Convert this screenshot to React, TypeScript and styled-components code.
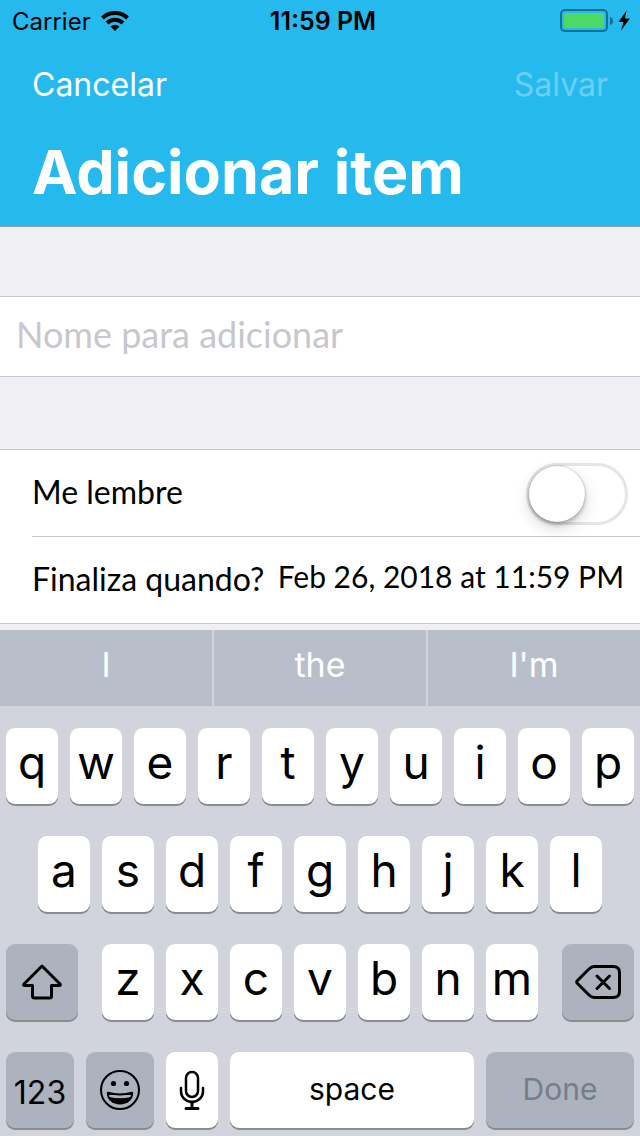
import React, { useState } from 'react';
import styled, { createGlobalStyle } from 'styled-components';

const ui = `Inter, "Liberation Sans", sans-serif`;
const form = `Lato, "Open Sans", sans-serif`;

const GlobalStyle = createGlobalStyle`
  *, *::before, *::after { box-sizing: border-box; }
  body { margin: 0; background: #efeff4; font-family: ${ui}; color: #000; }
  button, input { font: inherit; color: inherit; margin: 0; padding: 0; border: 0; background: none; }
  button:not(:disabled) { cursor: pointer; }
`;

const Screen = styled.div`
  display: flex;
  flex-direction: column;
  min-height: 100vh;
`;

const Header = styled.header`
  background: #25b9ee;
  border-bottom: 1px solid #8f9fa8;
`;

const StatusBar = styled.div`
  display: grid;
  grid-template-columns: 1fr auto 1fr;
  align-items: center;
  height: 40px;
  padding: 2px 10px 0 12px;
  font-size: 24px;
`;

const StatusGroup = styled.div<{ $end?: boolean }>`
  display: flex;
  align-items: center;
  justify-content: ${(p) => (p.$end ? 'flex-end' : 'flex-start')};
  gap: 10px;
`;

const Clock = styled.time`
  padding-left: 4px;
  font-size: 25px;
  font-weight: 600;
`;

const NavBar = styled.nav`
  display: flex;
  align-items: center;
  justify-content: space-between;
  height: 88px;
  padding: 2px 32px 0;
`;

const NavButton = styled.button`
  color: #fff;
  font-size: 32px;
  line-height: 40px;
  &:disabled { color: #6bcff4; }
`;

const Title = styled.h1`
  margin: 0;
  padding: 8px 32px 18px;
  color: #fff;
  font-size: 61px;
  line-height: 72px;
  font-weight: 700;
`;

const Form = styled.main`
  flex: 1;
  padding: 69px 0 6px;
  font-family: ${form};
`;

const Section = styled.section`
  background: #fff;
  border: solid #c8c7cc;
  border-width: 1px 0;
  & + & { margin-top: 72px; }
`;

const NameInput = styled.input`
  display: block;
  width: 100%;
  height: 79px;
  padding: 0 16px 6px;
  font-size: 36px;
  outline: none;
  &::placeholder { color: #c7c7cd; opacity: 1; }
`;

const Row = styled.div`
  display: flex;
  align-items: center;
  justify-content: space-between;
  height: 86px;
  margin-left: 32px;
  line-height: 40px;
  & + & {
    height: 87px;
    border-top: 1px solid #c8c7cc;
  }
`;

const RowLabel = styled.label`
  padding-bottom: 2px;
  font-size: 32px;
  white-space: nowrap;
`;

const DateValue = styled.button`
  padding: 0 16px 8px 0;
  font-size: 30px;
  white-space: nowrap;
`;

const Switch = styled.input`
  appearance: none;
  width: 102px;
  height: 62px;
  margin: 2px 12px 0 0;
  padding: 0;
  border: 3px solid #e5e5e5;
  border-radius: 31px;
  background: #fff;
  &::before {
    content: '';
    display: block;
    width: 56px;
    height: 56px;
    border-radius: 50%;
    background: #fff;
    box-shadow: 0 6px 16px rgba(0, 0, 0, 0.16), 0 3px 4px rgba(0, 0, 0, 0.2), 0 0 2px rgba(0, 0, 0, 0.3);
  }
  &:checked { background: #4cd964; border-color: #4cd964; }
  &:checked::before { margin-left: 40px; }
`;

const Keyboard = styled.div`
  background: #d1d4dc;
  padding-bottom: 8px;
`;

const Suggestions = styled.div`
  display: grid;
  grid-template-columns: repeat(3, 1fr);
  gap: 2px;
  margin-bottom: 22px;
`;

const Suggestion = styled.button`
  height: 76px;
  padding-bottom: 8px;
  background: #b8bfca;
  color: #fff;
  font-size: 34px;
`;

const KeyRow = styled.div<{ $inset?: boolean }>`
  display: flex;
  gap: 12px;
  padding: 0 ${(p) => (p.$inset ? 'calc(5% + 6px)' : '6px')};
  & + & { margin-top: 32px; }
`;

type KeyKind = 'letter' | 'word' | 'digits' | 'icon';
type KeyProps = { $kind?: KeyKind; $grow?: number; $dark?: boolean; $gap?: 'left' | 'right' };

const keySize: Record<KeyKind, number> = { letter: 46, word: 30, digits: 32, icon: 30 };
const keyPadding: Record<KeyKind, string> = { letter: '0 0 8px', word: '0 0 2px', digits: '4px 0 0', icon: '0' };

const Key = styled.button<KeyProps>`
  display: flex;
  align-items: center;
  justify-content: center;
  flex: ${(p) => p.$grow ?? 52} 1 0;
  min-width: 0;
  height: 76px;
  padding: ${(p) => keyPadding[p.$kind ?? 'letter']};
  margin-left: ${(p) => (p.$gap === 'left' ? 12 : 0)}px;
  margin-right: ${(p) => (p.$gap === 'right' ? 12 : 0)}px;
  border-radius: 9px;
  background: ${(p) => (p.$dark ? '#acb3bf' : '#fff')};
  box-shadow: 0 2px 0 #898c91;
  font-size: ${(p) => keySize[p.$kind ?? 'letter']}px;
  font-weight: 400;
  &:disabled { color: #777d86; }
`;

const Glyph = styled.svg<{ $weight?: number }>`
  display: block;
  flex: none;
  fill: none;
  stroke: #000;
  stroke-width: ${(p) => p.$weight ?? 3};
  stroke-linecap: round;
  stroke-linejoin: round;
`;

const WifiIcon = () => (
  <Glyph $weight={4} width="28" height="20" viewBox="0 0 28 20">
    <path d="M1.500 7a18 18 0 0 1 25 0" strokeLinecap="butt" />
    <path d="M6 12a11.500 11.500 0 0 1 16 0" strokeLinecap="butt" />
    <path d="M14 20l-4.500-4.500a6.400 6.400 0 0 1 9 0z" fill="#000" stroke="none" />
  </Glyph>
);

const BatteryIcon = () => (
  <svg width="70" height="24" viewBox="0 -1 70 24">
    <rect x="1" y="0" width="46" height="21" rx="4" fill="none" stroke="#176f8f" strokeWidth="2" />
    <rect x="4" y="3" width="40" height="15" rx="1" fill="#4cd964" />
    <path d="M50 7c4 1 4 7 0 8z" fill="#176f8f" />
    <path d="M66.500 0.500L58.500 12h5l-2.500 8.500L70 8.500h-5z" fill="#000" />
  </svg>
);

const ShiftIcon = () => (
  <Glyph width="40" height="36" viewBox="0 0 40 36">
    <path d="M20 2L2 20q-1 1.500 1 1.500h7.500V32q0 2 2 2h15q2 0 2-2V21.500H37q2 0 1-1.500z" />
  </Glyph>
);

const DeleteIcon = () => (
  <Glyph width="46" height="34" viewBox="0 0 46 34">
    <path d="M2.500 15.500L14 4q2.500-2.500 5-2.500h19q6.500 0 6.500 6v19q0 6-6.500 6H19q-2.500 0-5-2.500L2.500 18.500q-1.500-1.500 0-3z" />
    <path d="M22 11l12.500 12.500M34.500 11L22 23.500" />
  </Glyph>
);

const SmileIcon = () => (
  <Glyph $weight={2} width="40" height="40" viewBox="0 0 40 40">
    <circle cx="20" cy="20" r="19" />
    <circle cx="13.500" cy="13.500" r="2.600" fill="#000" stroke="none" />
    <circle cx="26.500" cy="13.500" r="2.600" fill="#000" stroke="none" />
    <path d="M7.800 22.800q12.200 3.500 24.400 0c0 6.500-5.200 10.700-12.200 10.700S7.800 29.300 7.800 22.800z" />
    <path d="M9 27q11 2.500 22 0c-2 4.500-6 6.500-11 6.500S11 31.500 9 27z" fill="#000" stroke="none" />
  </Glyph>
);

const MicIcon = () => (
  <Glyph width="26" height="40" viewBox="0 0 26 40">
    <rect x="7" y="2" width="12" height="25" rx="6" strokeWidth="2.500" />
    <path d="M2 18v3.500a11 10.500 0 0 0 22 0V18" strokeWidth="2.500" />
    <path d="M13 32v6M7 38.500h12" />
  </Glyph>
);

const letters = (row: string) => row.split('').map((c) => <Key key={c} type="button">{c}</Key>);

export default function App() {
  const [name, setName] = useState('');
  const [remind, setRemind] = useState(false);
  return (
    <Screen>
      <GlobalStyle />
      <Header>
        <StatusBar>
          <StatusGroup>
            <span>Carrier</span>
            <WifiIcon />
          </StatusGroup>
          <Clock>11:59 PM</Clock>
          <StatusGroup $end>
            <BatteryIcon />
          </StatusGroup>
        </StatusBar>
        <NavBar>
          <NavButton type="button">Cancelar</NavButton>
          <NavButton type="button" disabled>Salvar</NavButton>
        </NavBar>
        <Title>Adicionar item</Title>
      </Header>
      <Form>
        <Section>
          <NameInput
            aria-label="Nome para adicionar"
            placeholder="Nome para adicionar"
            value={name}
            onChange={(e) => setName(e.target.value)}
          />
        </Section>
        <Section>
          <Row>
            <RowLabel htmlFor="remind">Me lembre</RowLabel>
            <Switch id="remind" type="checkbox" role="switch" checked={remind} onChange={(e) => setRemind(e.target.checked)} />
          </Row>
          <Row>
            <RowLabel htmlFor="due">Finaliza quando?</RowLabel>
            <DateValue id="due" type="button">Feb 26, 2018 at 11:59 PM</DateValue>
          </Row>
        </Section>
      </Form>
      <Keyboard>
        <Suggestions>
          {['I', 'the', "I'm"].map((s) => <Suggestion key={s} type="button">{s}</Suggestion>)}
        </Suggestions>
        <KeyRow>{letters('qwertyuiop')}</KeyRow>
        <KeyRow $inset>{letters('asdfghjkl')}</KeyRow>
        <KeyRow>
          <Key type="button" $kind="icon" $dark $grow={72} $gap="right" aria-label="Shift"><ShiftIcon /></Key>
          {letters('zxcvbnm')}
          <Key type="button" $kind="icon" $dark $grow={72} $gap="left" aria-label="Delete"><DeleteIcon /></Key>
        </KeyRow>
        <KeyRow>
          <Key type="button" $kind="digits" $dark $grow={68}>123</Key>
          <Key type="button" $kind="icon" $dark $grow={68} aria-label="Emoji"><SmileIcon /></Key>
          <Key type="button" $kind="icon" aria-label="Dictate"><MicIcon /></Key>
          <Key type="button" $kind="word" $grow={244}>space</Key>
          <Key type="button" $kind="word" $dark $grow={148} disabled>Done</Key>
        </KeyRow>
      </Keyboard>
    </Screen>
  );
}
